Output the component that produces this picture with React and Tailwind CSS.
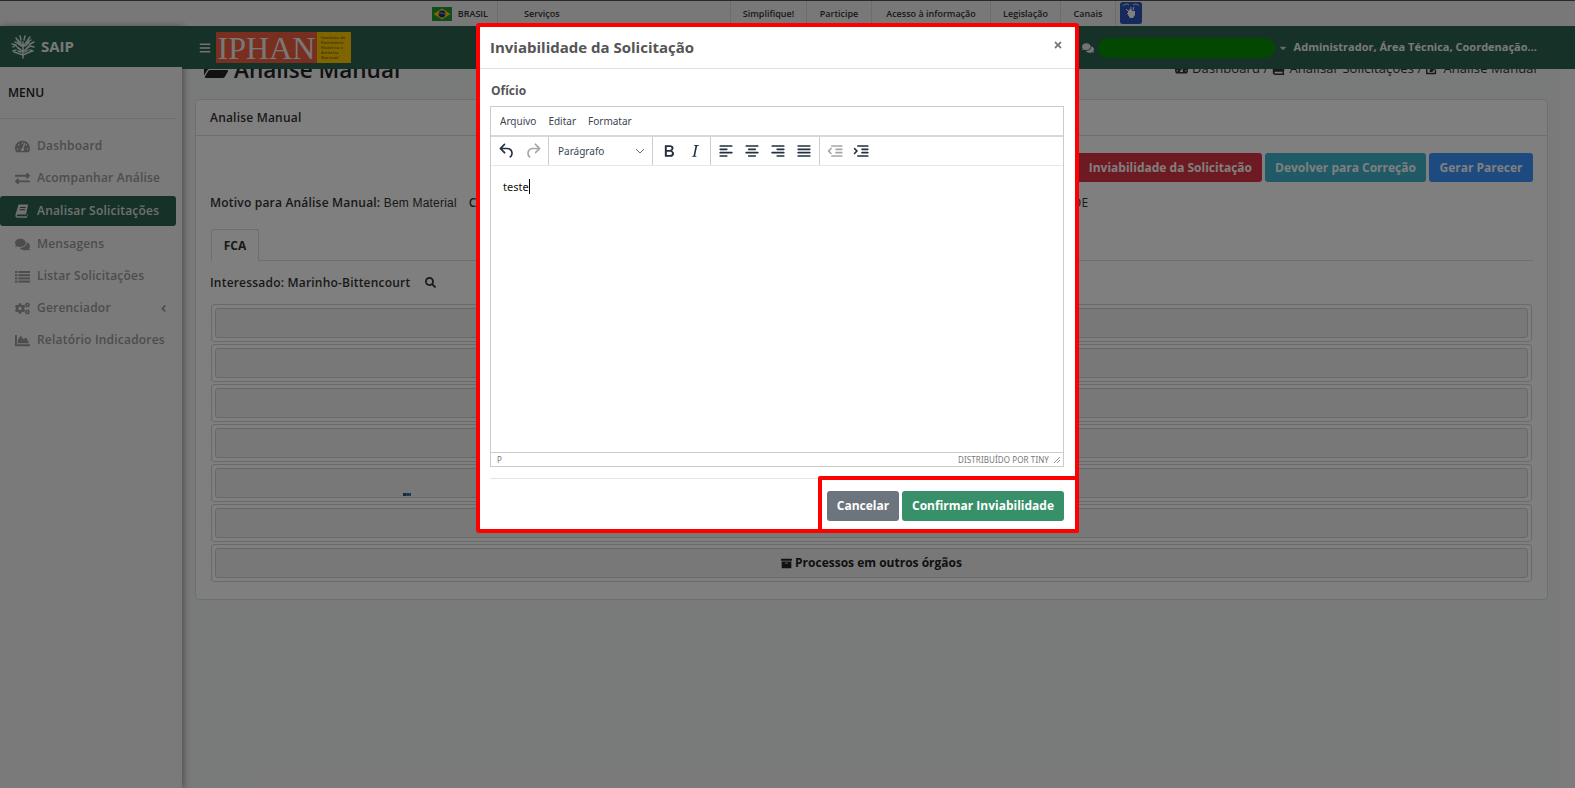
import React from 'react';
import { FaTachometerAlt, FaExchangeAlt, FaComments, FaCogs, FaChartArea, FaAngleLeft, FaSearch, FaArchive, FaFolderOpen, FaBars, FaCaretDown, FaTimes, FaEdit, FaBook } from 'react-icons/fa';

const OS = { fontFamily: '"Open Sans", "Noto Sans", sans-serif' };

const Flag = () => (
  <svg width="20" height="14" viewBox="0 0 20 14" className="shrink-0">
    <rect width="20" height="14" fill="#1f9b3a" />
    <polygon points="10,1.5 18.5,7 10,12.5 1.5,7" fill="#f4d000" />
    <circle cx="10" cy="7" r="3.4" fill="#1f2f80" />
    <path d="M6.8 6.2c2-.6 4.6-.2 6.4 1.2" stroke="#fff" strokeWidth="0.6" fill="none" />
  </svg>
);

const Access = () => (
  <svg width="22" height="22" viewBox="0 0 22 22" className="shrink-0">
    <rect width="22" height="22" rx="2.5" fill="#2f55b8" />
    <path d="M3 4c1-2 4-2.6 6-1M19 4c-1-2-4-2.6-6-1" stroke="#fff" strokeWidth="0.8" fill="none" />
    <path d="M8 9l2-2 3 2 2 0 0 4-2 3-3 0-2-3z" fill="#fff" />
    <path d="M6 7l3 3M7 12l2-1M14 5l-1 3M11 5l0 3" stroke="#fff" strokeWidth="1" />
  </svg>
);

const Emblem = () => (
  <svg width="26" height="26" viewBox="0 0 26 26" className="shrink-0">
    <g stroke="#d6e8dc" strokeWidth="1.5" fill="none" strokeLinecap="round">
      <path d="M13 24V8M13 18L6 12M13 18l7-7M13 13L8 6M13 13l5-7M13 21L4 18M13 21l9-4" />
      <path d="M3 13l3-2M2 10l4 1M6 4l2 3M10 2l1 4M15 2l-1 4M20 3l-2 3M24 8l-4 2M24 13l-4-1M3 17l3-1M23 17l-3-1" />
      <path d="M9 9l2-1M16 9l2-1M8 14l2 1M17 14l2-1M5 8l3 1M21 6l-3 2M7 9l4 3M19 9l-4 3M8 17l3 1M18 16l-3 2" />
    </g>
  </svg>
);

const SlantBook = () => (
  <svg width="14" height="14" viewBox="0 0 14 14" fill="currentColor">
    <path d="M3.6 0.6H13.2L11 10.4H3c-.9 0-1.2.5-1.2 1 0 .6.4.9 1 .9h8.9l.6-2.2.5.5-.9 3.2H2.6C1.2 13.8 0.4 12.8.4 11.5c0-.4.1-.8.2-1.2L3.6 0.6zM5 3v1h5.6l.2-1H5zm-.5 2.2v1h5.6l.2-1H4.5z" fillRule="evenodd" />
  </svg>
);

const ListIcon = () => (
  <svg width="15" height="13" viewBox="0 0 15 13" fill="currentColor">
    <rect x="0" y="1" width="2.4" height="2" /><rect x="3.4" y="1" width="11.6" height="2" />
    <rect x="0" y="4.2" width="2.4" height="2" /><rect x="3.4" y="4.2" width="11.6" height="2" />
    <rect x="0" y="7.4" width="2.4" height="2" /><rect x="3.4" y="7.4" width="11.6" height="2" />
    <rect x="0" y="10.6" width="2.4" height="2" /><rect x="3.4" y="10.6" width="11.6" height="2" />
  </svg>
);

const Tiny = ({ d, off }) => (
  <svg width="20" height="20" viewBox="0 0 24 24" className="shrink-0" fill={off ? '#a6a6a6' : '#222f3e'}>
    <path d={d} />
  </svg>
);

const P = {
  undo: 'M6.4 8H12c3.7 0 6.2 2 6.8 5.1.6 2.7-.4 5.6-2.3 6.8a1 1 0 0 1-1-1.8c1.1-.6 1.8-2.7 1.4-4.6-.5-2.1-2.1-3.5-4.9-3.5H6.4l3.3 3.3a1 1 0 1 1-1.4 1.4l-5-5a1 1 0 0 1 0-1.4l5-5a1 1 0 0 1 1.4 1.4L6.4 8Z',
  redo: 'M17.6 10H12c-2.8 0-4.4 1.4-4.9 3.5-.4 2 .3 4 1.4 4.6a1 1 0 1 1-1 1.8c-2-1.2-2.9-4.1-2.3-6.8.6-3 3-5.1 6.8-5.1h5.6l-3.3-3.3a1 1 0 1 1 1.4-1.4l5 5a1 1 0 0 1 0 1.4l-5 5a1 1 0 0 1-1.4-1.4l3.3-3.3Z',
  bold: 'M7.8 19c-.3 0-.5 0-.6-.2l-.2-.5V5.7c0-.2 0-.4.2-.5l.6-.2h5c1.5 0 2.7.3 3.5 1 .7.6 1.1 1.4 1.1 2.5a3 3 0 0 1-.6 1.9c-.4.6-1 1-1.6 1.2.4.1.9.3 1.3.6s.8.7 1 1.2c.4.4.5 1 .5 1.6 0 1.3-.4 2.3-1.3 3-.8.7-2.1 1-3.8 1H7.8Zm5-8.3c.6 0 1.2-.1 1.6-.5.4-.3.6-.7.6-1.3 0-1.1-.8-1.7-2.3-1.7H9.3v3.5h3.4Zm.5 6c.7 0 1.3-.1 1.7-.4.4-.4.6-.9.6-1.5s-.2-1-.7-1.4c-.4-.3-1-.4-2-.4H9.4v3.8h4Z',
  italic: 'm16.7 4.7-.1.9h-.3c-.6 0-1 0-1.4.3-.3.3-.4.6-.5 1.1l-2.1 9.8v.6c0 .5.4.8 1.4.8h.2l-.2.8H8l.2-.8h.2c1.1 0 1.8-.5 2-1.5l2-9.8.1-.5c0-.6-.4-.8-1.4-.8h-.3l.2-.9h5.8Z',
  left: 'M5 5h14c.6 0 1 .4 1 1s-.4 1-1 1H5a1 1 0 1 1 0-2Zm0 4h8c.6 0 1 .4 1 1s-.4 1-1 1H5a1 1 0 1 1 0-2Zm0 8h8c.6 0 1 .4 1 1s-.4 1-1 1H5a1 1 0 0 1 0-2Zm0-4h14c.6 0 1 .4 1 1s-.4 1-1 1H5a1 1 0 0 1 0-2Z',
  center: 'M5 5h14c.6 0 1 .4 1 1s-.4 1-1 1H5a1 1 0 1 1 0-2Zm3 4h8c.6 0 1 .4 1 1s-.4 1-1 1H8a1 1 0 1 1 0-2Zm0 8h8c.6 0 1 .4 1 1s-.4 1-1 1H8a1 1 0 0 1 0-2Zm-3-4h14c.6 0 1 .4 1 1s-.4 1-1 1H5a1 1 0 0 1 0-2Z',
  right: 'M5 5h14c.6 0 1 .4 1 1s-.4 1-1 1H5a1 1 0 1 1 0-2Zm6 4h8c.6 0 1 .4 1 1s-.4 1-1 1h-8a1 1 0 0 1 0-2Zm0 8h8c.6 0 1 .4 1 1s-.4 1-1 1h-8a1 1 0 0 1 0-2Zm-6-4h14c.6 0 1 .4 1 1s-.4 1-1 1H5a1 1 0 0 1 0-2Z',
  justify: 'M5 5h14c.6 0 1 .4 1 1s-.4 1-1 1H5a1 1 0 1 1 0-2Zm0 4h14c.6 0 1 .4 1 1s-.4 1-1 1H5a1 1 0 1 1 0-2Zm0 4h14c.6 0 1 .4 1 1s-.4 1-1 1H5a1 1 0 0 1 0-2Zm0 4h14c.6 0 1 .4 1 1s-.4 1-1 1H5a1 1 0 0 1 0-2Z',
  outdent: 'M7 5h12c.6 0 1 .4 1 1s-.4 1-1 1H7a1 1 0 1 1 0-2Zm5 4h7c.6 0 1 .4 1 1s-.4 1-1 1h-7a1 1 0 0 1 0-2Zm0 4h7c.6 0 1 .4 1 1s-.4 1-1 1h-7a1 1 0 0 1 0-2Zm-5 4h12a1 1 0 0 1 0 2H7a1 1 0 0 1 0-2Zm-2.6-5 2.3 2.3a1 1 0 0 1-1.4 1.4l-3-3a1 1 0 0 1 0-1.4l3-3a1 1 0 1 1 1.4 1.4L4.4 12Z',
  indent: 'M7 5h12c.6 0 1 .4 1 1s-.4 1-1 1H7a1 1 0 1 1 0-2Zm5 4h7c.6 0 1 .4 1 1s-.4 1-1 1h-7a1 1 0 0 1 0-2Zm0 4h7c.6 0 1 .4 1 1s-.4 1-1 1h-7a1 1 0 0 1 0-2Zm-5 4h12a1 1 0 0 1 0 2H7a1 1 0 0 1 0-2Zm-2.4-5L2.3 9.7a1 1 0 0 1 1.4-1.4l3 3a1 1 0 0 1 0 1.4l-3 3a1 1 0 0 1-1.4-1.4L4.6 12Z',
};

const TopItem = ({ w, children }) => (
  <div className={`flex h-full items-center justify-center border-l border-[#d8d8d8] text-[9px] font-semibold text-[#333] ${w}`}>{children}</div>
);

const TopBar = () => (
  <div className="flex h-[26px] shrink-0 items-center border-t border-[#555] bg-[#f1f1f1]" style={OS}>
    <div className="flex w-[497px] items-center justify-end gap-[6px] pr-[9px]">
      <Flag />
      <span className="text-[9px] font-semibold text-[#333]">BRASIL</span>
    </div>
    <TopItem w="w-[233px] !justify-start pl-[26px]">Serviços</TopItem>
    <TopItem w="w-[76px]">Simplifique!</TopItem>
    <TopItem w="w-[65px]">Participe</TopItem>
    <TopItem w="w-[119px]">Acesso à informação</TopItem>
    <TopItem w="w-[70px]">Legislação</TopItem>
    <TopItem w="w-[55px]">Canais</TopItem>
    <div className="h-full border-l border-[#d8d8d8] pl-[4px] pt-[1px]"><Access /></div>
  </div>
);

const NavItem = ({ icon: Icon, label, active, arrow }) => (
  <div className={`flex items-center rounded-[3px] pl-[15px] text-[12px] font-semibold tracking-[0.2px] ${active ? 'my-[2px] h-[30px] bg-[#2a6350] font-bold text-[#e0e0e0]' : 'h-[32px] text-[#9a9a9a]'}`}>
    <span className="flex w-[22px] justify-start text-[15px]"><Icon /></span>
    <span className="flex-1">{label}</span>
    {arrow && <FaAngleLeft className="mr-[7px] text-[11px]" />}
  </div>
);

const Sidebar = () => (
  <aside className="relative flex w-[182px] shrink-0 flex-col bg-[#f4f4f4] shadow-[2px_0_6px_rgba(0,0,0,0.35)]" style={OS}>
    <div className="flex h-[41px] items-center gap-[5px] bg-[#2a6350] pl-[10px] text-[15px] font-bold text-[#f0f0f0]">
      <Emblem />
      SAIP
    </div>
    <div className="mr-[6px] flex h-[52px] items-center border-b border-[#dcdcdc] pl-[8px] text-[12px] font-semibold text-[#222]">MENU</div>
    <nav className="mr-[6px] mt-[11px] flex flex-col">
      <NavItem icon={FaTachometerAlt} label="Dashboard" />
      <NavItem icon={FaExchangeAlt} label="Acompanhar Análise" />
      <NavItem icon={SlantBook} label="Analisar Solicitações" active />
      <NavItem icon={FaComments} label="Mensagens" />
      <NavItem icon={ListIcon} label="Listar Solicitações" />
      <NavItem icon={FaCogs} label="Gerenciador" arrow />
      <NavItem icon={FaChartArea} label="Relatório Indicadores" />
    </nav>
  </aside>
);

const Header = () => (
  <div className="relative flex h-[43px] shrink-0 items-center bg-[#2a6350] pl-[17px]" style={OS}>
    <FaBars className="text-[12px] text-[#e8e8e8]" />
    <div className="ml-[5px] flex h-[31px] w-[135px]">
      <div className="flex w-[101px] items-center justify-center overflow-hidden bg-[#f25f3e] text-[32px] leading-none text-[#f0f0f0]" style={{ fontFamily: '"Liberation Serif", serif' }}>IPHAN</div>
      <div className="flex w-[34px] flex-col justify-center bg-[#ffc800] pl-[4px] text-[3.5px] font-bold leading-[5px] tracking-[0.3px] text-[#8a6a10]">
        <span>Instituto do</span><span>Patrimônio</span><span>Histórico e</span><span>Artístico</span><span>Nacional</span>
      </div>
    </div>
    <div className="flex-1" />
    <FaComments className="mr-[4px] text-[12px] text-[#e8e8e8]" />
    <div className="h-[20px] w-[177px] rounded-full bg-[#078f07]" />
    <FaCaretDown className="ml-[3px] mr-[6px] text-[10px] text-[#d0d0d0]" />
    <span className="mr-[38px] text-[11px] font-bold text-[#f4f4f4]">Administrador, Área Técnica, Coordenação...</span>
  </div>
);

const Accordion = ({ children }) => (
  <div className="rounded-[3px] border border-[#d5d5d5] p-[3px]">
    <div className="flex h-[30px] items-center justify-center gap-[3px] rounded-[3px] border border-[#d0d0d0] bg-[#f0f0f0] text-[12px] font-bold text-[#222]">{children}</div>
  </div>
);

const Content = () => (
  <div className="flex min-h-0 flex-1">
    <main className="flex min-h-0 min-w-0 flex-1 flex-col overflow-hidden pl-[13px] pr-[12px]" style={OS}>
      <div className="-mt-[14px] flex h-[44px] shrink-0 items-start justify-between pl-[9px] pr-[11px]">
        <div className="flex items-center gap-[6px] text-[22.5px] font-semibold leading-[30px] text-[#222]">
          <FaFolderOpen className="text-[24px]" /> Analise Manual
        </div>
        <div className="flex items-center gap-[4px] pt-[4px] text-[13px] tracking-[0.1px] text-[#333]">
          <FaTachometerAlt /> Dashboard / <FaBook /> Analisar Solicitações / <FaEdit /> Analise Manual
        </div>
      </div>
      <section className="h-[501px] shrink-0 rounded-[4px] border border-[#dfdfdf] bg-white">
        <div className="flex h-[36px] items-center border-b border-[#dfdfdf] pl-[14px] text-[12px] font-semibold tracking-[0.2px] text-[#333]">Analise Manual</div>
        <div className="flex h-[46px] items-end justify-end gap-[3px] pr-[14px]">
          <button className="flex h-[29px] w-[190px] items-center justify-end rounded-[3px] bg-[#dc3545] pr-[10px] text-[12px] font-bold text-white">Inviabilidade da Solicitação</button>
          <button className="h-[29px] w-[161px] rounded-[3px] bg-[#41b4cc] text-[12px] font-bold text-white">Devolver para Correção</button>
          <button className="h-[29px] w-[104px] rounded-[3px] bg-[#3a94ff] text-[12px] font-bold text-white">Gerar Parecer</button>
        </div>
        <div className="flex h-[42px] items-center pl-[14px] text-[12px] font-semibold tracking-[0.2px] text-[#333]">
          <span>Motivo para Análise Manual: <span className="font-normal" style={{ fontFamily: '"Liberation Sans", sans-serif' }}>Bem Material</span></span>
          <span className="ml-[12px]">C</span>
          <span className="ml-[596px] font-normal">DE</span>
        </div>
        <div className="ml-[15px] mr-[14px] mt-[5px] flex h-[32px] border-b border-[#dcdcdc]">
          <div className="flex h-[32px] w-[48px] items-center justify-center rounded-t-[3px] border border-b-0 border-[#dcdcdc] bg-white text-[12px] font-bold text-[#333]">FCA</div>
        </div>
        <div className="flex h-[43px] items-center gap-[15px] pl-[14px] text-[12px] font-semibold tracking-[0.2px] text-[#333]">
          Interessado: Marinho-Bittencourt <FaSearch className="text-[11px]" />
        </div>
        <div className="relative mx-[15px] flex flex-col gap-[2px]">
          <Accordion /><Accordion /><Accordion /><Accordion /><Accordion /><Accordion />
          <Accordion><FaArchive className="text-[11px]" /> Processos em outros órgãos</Accordion>
          <div className="absolute left-[192px] top-[189px] flex h-[3px] w-[8px]">
            <div className="w-[3px] bg-[#2a6350]" /><div className="w-[5px] bg-[#3a72c0]" />
          </div>
        </div>
      </section>
    </main>
    <div className="w-[15px] shrink-0 bg-[#f8f8f8]" />
  </div>
);

const TinyBtn = ({ d, off }) => (
  <div className="flex h-[28px] w-[26px] items-center justify-center"><Tiny d={d} off={off} /></div>
);

const Modal = () => (
  <div className="absolute left-[476px] top-[23px] z-30 flex h-[510px] w-[603px] flex-col rounded-[3px] border-4 border-[#ff0000] bg-white" style={OS}>
    <div className="flex h-[42px] shrink-0 items-center justify-between border-b border-[#dee2e6] pb-[1px] pl-[10px] pr-[12px]">
      <span className="text-[15px] font-bold text-[#555]">Inviabilidade da Solicitação</span>
      <FaTimes className="-mt-[4px] text-[10px] text-[#777]" />
    </div>
    <div className="flex h-[37px] shrink-0 items-center pl-[11px] pt-[6px] text-[12px] font-bold text-[#555]">Ofício</div>
    <div className="ml-[10px] mr-[11px] flex h-[361px] shrink-0 flex-col border border-[#ccc]" style={{ fontFamily: '"Noto Sans", sans-serif' }}>
      <div className="flex h-[30px] shrink-0 items-center gap-[12px] border-b-2 border-[#d8d8d8] pl-[9px] text-[10px] text-[#3a4552]">
        <span>Arquivo</span><span>Editar</span><span>Formatar</span>
      </div>
      <div className="flex h-[29px] shrink-0 items-center border-b border-[#e8e8e8]">
        <div className="flex h-full w-[58px] items-center justify-center border-r border-[#ccc]">
          <TinyBtn d={P.undo} /><TinyBtn d={P.redo} off />
        </div>
        <div className="flex h-full w-[104px] items-center justify-between border-r border-[#ccc] pl-[9px] pr-[7px] text-[10px] text-[#3a4552]">
          Parágrafo
          <svg width="10" height="10" viewBox="0 0 10 10"><path d="M1 3l4 4 4-4" stroke="#666" strokeWidth="1" fill="none" /></svg>
        </div>
        <div className="flex h-full w-[58px] items-center justify-center border-r border-[#ccc]">
          <TinyBtn d={P.bold} /><TinyBtn d={P.italic} />
        </div>
        <div className="flex h-full w-[109px] items-center justify-center border-r border-[#ccc]">
          <TinyBtn d={P.left} /><TinyBtn d={P.center} /><TinyBtn d={P.right} /><TinyBtn d={P.justify} />
        </div>
        <div className="flex h-full items-center pl-[3px]">
          <TinyBtn d={P.outdent} off /><TinyBtn d={P.indent} />
        </div>
      </div>
      <div className="min-h-0 flex-1 px-[12px] pt-[13px] text-[11px] leading-[16px] text-[#111]">
        <span className="border-r border-black">teste</span>
      </div>
      <div className="flex h-[14px] shrink-0 items-center justify-between border-t border-[#ccc] pl-[6px] pr-[2px] text-[8px] text-[#777]">
        <span>P</span>
        <span className="flex items-center gap-[4px] tracking-[0.1px]">
          DISTRIBUÍDO POR TINY
          <svg width="8" height="8" viewBox="0 0 8 8"><path d="M7 1L1 7M7 4L4 7" stroke="#777" strokeWidth="0.8" /></svg>
        </span>
      </div>
    </div>
    <div className="ml-[10px] mr-[11px] mt-[11px] flex flex-1 items-center justify-end gap-[3px] border-t border-[#e3e3e3] pt-[4px]">
      <button className="h-[30px] w-[72px] rounded-[3px] bg-[#6c757d] text-[12px] font-bold text-white">Cancelar</button>
      <button className="h-[30px] w-[162px] rounded-[3px] bg-[#38906a] text-[12px] font-bold text-white">Confirmar Inviabilidade</button>
    </div>
    <div className="pointer-events-none absolute -bottom-[4px] -right-[4px] h-[57px] w-[261px] rounded-[2px] border-4 border-[#ff0000]" />
  </div>
);

export default function App() {
  return (
    <div className="relative flex h-[788px] w-[1575px] flex-col overflow-hidden bg-[#f3f4f5]">
      <TopBar />
      <div className="flex min-h-0 flex-1">
        <Sidebar />
        <div className="flex min-w-0 flex-1 flex-col">
          <Header />
          <Content />
        </div>
      </div>
      <div className="absolute inset-0 z-20 bg-black/50" />
      <Modal />
    </div>
  );
}
